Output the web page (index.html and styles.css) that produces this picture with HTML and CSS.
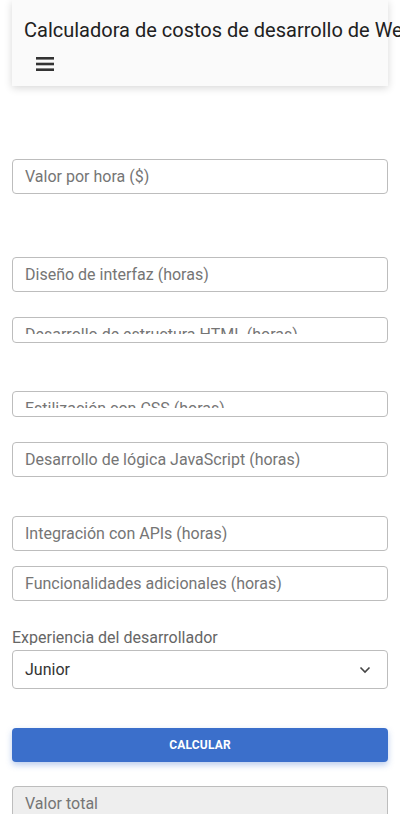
FILE: index.html
```html
<!DOCTYPE html>
<html lang="es">
<head>
<meta charset="utf-8">
<title>Calculadora de costos de desarrollo de Web</title>
<link rel="stylesheet" href="styles.css">
</head>
<body>
<header class="appbar">
  <h1 class="title">Calculadora de costos de desarrollo de Web</h1>
  <button class="menu" aria-label="Menú">
    <svg width="18" height="16" viewBox="0 0 18 16"><rect x="0" y="1" width="18" height="2.6" fill="#333"/><rect x="0" y="6.7" width="18" height="2.6" fill="#333"/><rect x="0" y="12.4" width="18" height="2.6" fill="#333"/></svg>
  </button>
</header>
<main class="form">
  <div class="field gap-73"><div class="ph">Valor por hora ($)</div></div>
  <div class="field gap-63"><div class="ph">Diseño de interfaz (horas)</div></div>
  <div class="field short gap-25"><div class="ph">Desarrollo de estructura HTML (horas)</div></div>
  <div class="field short gap-48"><div class="ph">Estilización con CSS (horas)</div></div>
  <div class="field gap-25"><div class="ph">Desarrollo de lógica JavaScript (horas)</div></div>
  <div class="field gap-39"><div class="ph">Integración con APIs (horas)</div></div>
  <div class="field gap-15"><div class="ph">Funcionalidades adicionales (horas)</div></div>
  <div class="label">Experiencia del desarrollador</div>
  <div class="select">
    <span>Junior</span>
    <svg width="12" height="8" viewBox="0 0 12 8"><path d="M1.5 1.5 L6 6 L10.5 1.5" fill="none" stroke="#444" stroke-width="1.6"/></svg>
  </div>
  <button class="btn">CALCULAR</button>
  <div class="field total"><div class="ph">Valor total</div></div>
</main>
</body>
</html>
```
FILE: styles.css
```css
* { box-sizing: border-box; }
html, body { margin: 0; padding: 0; overflow: hidden; background: #fff; }
body {
  font-family: Roboto, "Liberation Sans", sans-serif;
  width: 400px;
  height: 814px;
}
.appbar {
  margin: 0 12px;
  height: 86px;
  background: #fafafa;
  box-shadow: 0 2px 8px rgba(0,0,0,0.16);
  padding: 18px 0 0 12px;
}
.title {
  margin: 0;
  font-size: 20px;
  font-weight: 400;
  color: #212121;
  line-height: 24px;
  white-space: nowrap;
}
.menu {
  display: block;
  margin: 14px 0 0 12px;
  padding: 0;
  border: 0;
  background: none;
  height: 16px;
  width: 18px;
}
.menu svg { display: block; }
.form {
  padding: 0 12px;
  display: flex;
  flex-direction: column;
}
.field {
  border: 1px solid #bdbdbd;
  border-radius: 4px;
  padding: 8px 12px;
  background: #fff;
  flex: none;
}
.ph {
  font-size: 16px;
  line-height: 17px;
  color: #757575;
  white-space: nowrap;
  overflow: hidden;
  height: 17px;
}
.field.short .ph { height: 8px; line-height: 18px; }
.gap-73 { margin-top: 73px; }
.gap-63 { margin-top: 63px; }
.gap-48 { margin-top: 48px; }
.gap-39 { margin-top: 39px; }
.gap-25 { margin-top: 25px; }
.gap-15 { margin-top: 15px; }
.label {
  margin-top: 27px;
  font-size: 16px;
  line-height: 20px;
  height: 17px;
  overflow: hidden;
  color: #666;
  flex: none;
}
.select {
  margin-top: 5px;
  height: 39px;
  border: 1px solid #bdbdbd;
  border-radius: 4px;
  display: flex;
  align-items: center;
  justify-content: space-between;
  padding: 0 16px 0 12px;
  font-size: 16px;
  color: #333;
  flex: none;
}
.btn {
  margin-top: 39px;
  height: 34px;
  border: 0;
  border-radius: 4px;
  background: #3b6fcb;
  color: #fff;
  font-family: Roboto, "Liberation Sans", sans-serif;
  font-size: 12px;
  font-weight: 700;
  letter-spacing: 0.2px;
  box-shadow: 0 3px 6px rgba(59,111,203,0.35);
  flex: none;
}
.total {
  margin-top: 24px;
  background: #eeeeee;
  height: 40px;
}
```
